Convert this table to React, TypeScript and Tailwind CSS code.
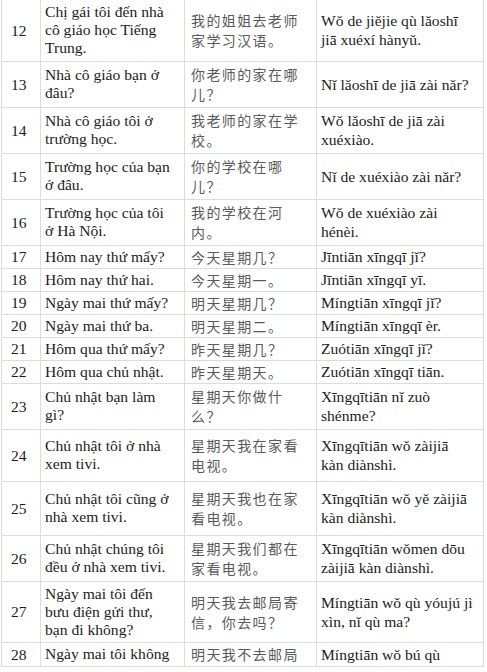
const rows = [
  { n: 12, h: 'h-[61px]', vi: ['Chị gái tôi đến nhà', 'cô giáo học Tiếng', 'Trung.'], zh: ['我的姐姐去老师', '家学习汉语。'], py: ['Wǒ de jiějie qù lǎoshī', 'jiā xuéxí hànyǔ.'] },
  { n: 13, h: 'h-[46px]', vi: ['Nhà cô giáo bạn ở', 'đâu?'], zh: ['你老师的家在哪', '儿？'], py: ['Nǐ lǎoshī de jiā zài nǎr?'] },
  { n: 14, h: 'h-[46px]', vi: ['Nhà cô giáo tôi ở', 'trường học.'], zh: ['我老师的家在学', '校。'], py: ['Wǒ lǎoshī de jiā zài', 'xuéxiào.'] },
  { n: 15, h: 'h-[46px]', vi: ['Trường học của bạn', 'ở đâu.'], zh: ['你的学校在哪', '儿？'], py: ['Nǐ de xuéxiào zài nǎr?'] },
  { n: 16, h: 'h-[46px]', vi: ['Trường học của tôi', 'ở Hà Nội.'], zh: ['我的学校在河', '内。'], py: ['Wǒ de xuéxiào zài', 'hénèi.'] },
  { n: 17, h: 'h-[23px]', vi: ['Hôm nay thứ mấy?'], zh: ['今天星期几？'], py: ['Jīntiān xīngqī jǐ?'] },
  { n: 18, h: 'h-[23px]', vi: ['Hôm nay thứ hai.'], zh: ['今天星期一。'], py: ['Jīntiān xīngqī yī.'] },
  { n: 19, h: 'h-[23px]', vi: ['Ngày mai thứ mấy?'], zh: ['明天星期几？'], py: ['Míngtiān xīngqī jǐ?'] },
  { n: 20, h: 'h-[23px]', vi: ['Ngày mai thứ ba.'], zh: ['明天星期二。'], py: ['Míngtiān xīngqī èr.'] },
  { n: 21, h: 'h-[23px]', vi: ['Hôm qua thứ mấy?'], zh: ['昨天星期几？'], py: ['Zuótiān xīngqī jǐ?'] },
  { n: 22, h: 'h-[23px]', vi: ['Hôm qua chủ nhật.'], zh: ['昨天星期天。'], py: ['Zuótiān xīngqī tiān.'] },
  { n: 23, h: 'h-[46px]', vi: ['Chủ nhật bạn làm', 'gì?'], zh: ['星期天你做什', '么？'], py: ['Xīngqītiān nǐ zuò', 'shénme?'] },
  { n: 24, h: 'h-[52px]', vi: ['Chủ nhật tôi ở nhà', 'xem tivi.'], zh: ['星期天我在家看', '电视。'], py: ['Xīngqītiān wǒ zàijiā', 'kàn diànshì.'] },
  { n: 25, h: 'h-[54px]', vi: ['Chủ nhật tôi cũng ở', 'nhà xem tivi.'], zh: ['星期天我也在家', '看电视。'], py: ['Xīngqītiān wǒ yě zàijiā', 'kàn diànshì.'] },
  { n: 26, h: 'h-[46px]', vi: ['Chủ nhật chúng tôi', 'đều ở nhà xem tivi.'], zh: ['星期天我们都在', '家看电视。'], py: ['Xīngqītiān wǒmen dōu', 'zàijiā kàn diànshì.'] },
  { n: 27, h: 'h-[61px]', vi: ['Ngày mai tôi đến', 'bưu điện gửi thư,', 'bạn đi không?'], zh: ['明天我去邮局寄', '信，你去吗？'], py: ['Míngtiān wǒ qù yóujú jì', 'xìn, nǐ qù ma?'] },
  { n: 28, h: 'h-[24px]', vi: ['Ngày mai tôi không'], zh: ['明天我不去邮局'], py: ['Míngtiān wǒ bú qù'] },
]

function Lines({ items }: { items: string[] }) {
  return (
    <>
      {items.map((t, i) => (
        <div key={i} className="whitespace-nowrap">
          {t}
        </div>
      ))}
    </>
  )
}

export default function App() {
  return (
    <div className="w-[487px] h-[672px] bg-white overflow-hidden">
      <table className="border-collapse ml-[1px] table-fixed w-[482px] font-['Liberation_Serif',serif] text-[15.6px] text-[#1c1c1c]">
        <colgroup>
          <col className="w-[39px]" />
          <col className="w-[144px]" />
          <col className="w-[132px]" />
          <col className="w-[167px]" />
        </colgroup>
        <tbody>
          {rows.map((r) => (
            <tr key={r.n} className={`${r.h} border-b border-[#dcdcdc]`}>
              <td className="border-l border-r border-[#dcdcdc] pl-[9px] align-middle leading-[19px]">
                {r.n}
              </td>
              <td className="border-r border-[#dcdcdc] pl-[4px] align-middle leading-[18px]">
                <Lines items={r.vi} />
              </td>
              <td className="border-r border-[#dcdcdc] pl-[6px] align-middle leading-[20px] text-[14px] tracking-[1.4px] text-[#5a5a5a] font-['Noto_Sans_CJK_SC',sans-serif]">
                <Lines items={r.zh} />
              </td>
              <td className="border-r border-[#dcdcdc] pl-[4px] align-middle leading-[19px]">
                <Lines items={r.py} />
              </td>
            </tr>
          ))}
        </tbody>
      </table>
    </div>
  )
}
